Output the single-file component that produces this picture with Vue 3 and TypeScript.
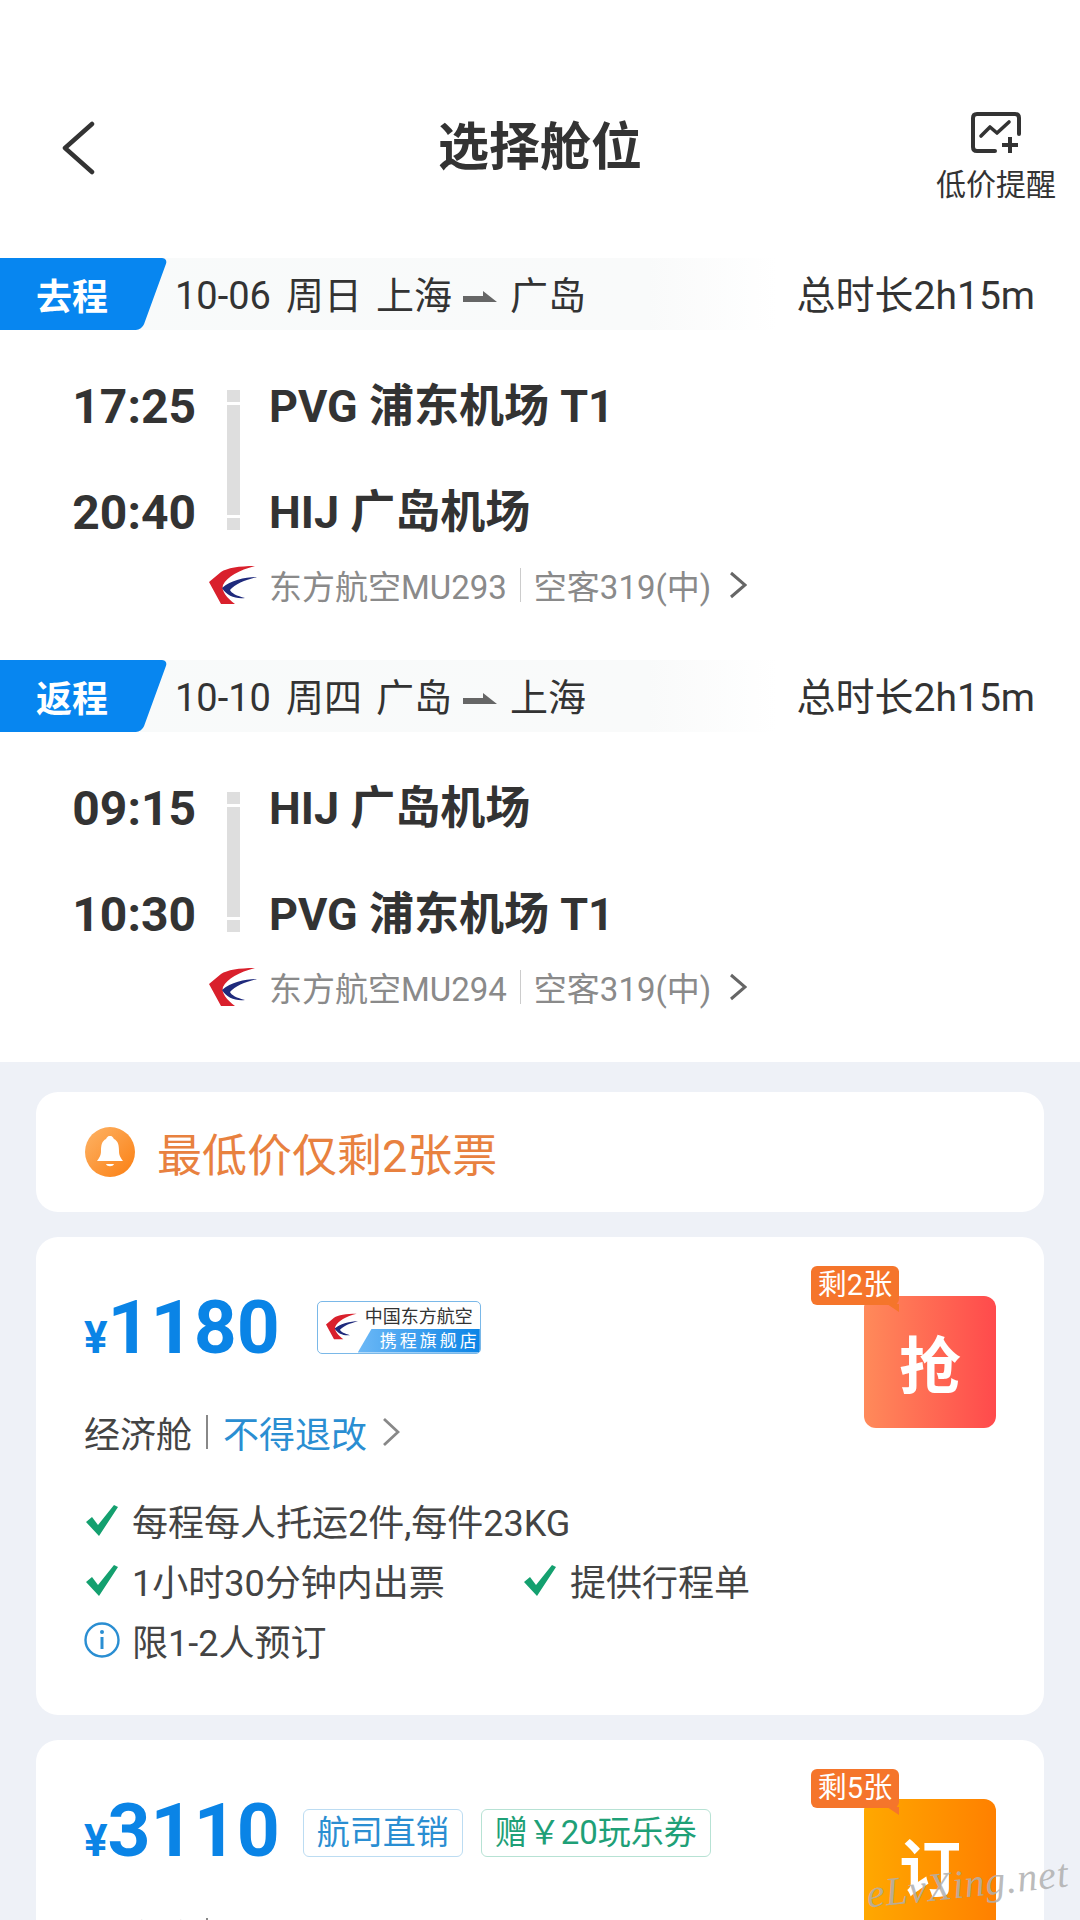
<template>
  <div class="page">
    <header class="topbar">
      <svg class="back" width="34" height="54" viewBox="0 0 34 54"><path d="M31 3 L4 27 L31 51" fill="none" stroke="#333" stroke-width="4.5" stroke-linecap="round" stroke-linejoin="round"/></svg>
      <h1 class="title">选择舱位</h1>
      <div class="remind">
        <svg width="50" height="42" viewBox="0 0 50 42"><path d="M24 39 H6 Q2 39 2 35 V6 Q2 2 6 2 H44 Q48 2 48 6 V22" fill="none" stroke="#333" stroke-width="4" stroke-linecap="round"/><path d="M10 24 L19 15 L26 21 L38 10" fill="none" stroke="#333" stroke-width="3.6" stroke-linecap="round" stroke-linejoin="round"/><path d="M31 33 H47 M39 25 V41" fill="none" stroke="#333" stroke-width="4"/></svg>
        <span>低价提醒</span>
      </div>
    </header>

    <section v-for="leg in legs" :key="leg.tag" class="leg">
      <div class="leg-head">
        <div class="leg-tag"><span>{{ leg.tag }}</span></div>
        <div class="leg-date">
          <span>{{ leg.date }}</span><span>{{ leg.week }}</span><span>{{ leg.from }}</span>
          <svg class="arrow" width="34" height="12" viewBox="0 0 34 12"><path d="M0 5 H20 V0 L34 11 H0 Z" fill="#666"/></svg>
          <span>{{ leg.to }}</span>
        </div>
        <div class="leg-total">总时长2h15m</div>
      </div>
      <div class="route">
        <div class="times"><div>{{ leg.dep }}</div><div>{{ leg.arr }}</div></div>
        <div class="route-line"><i></i><i class="long"></i><i></i></div>
        <div class="ports"><div>{{ leg.depPort }}</div><div>{{ leg.arrPort }}</div></div>
      </div>
      <div class="airline">
        <svg class="logo" width="48" height="40" viewBox="0 0 48 40">
          <path d="M46 1 C30 1 18 3 12 7 L0 17 L12 39 H26 C18 33 12 26 14 20 C18 12 30 5 46 1 Z" fill="#d9202c"/>
          <path d="M48 12 C36 12 22 15 13 23 C18 31 26 34 36 33 C28 31 22 28 21 25 C26 19 36 15 48 12 Z" fill="#1f2a7c"/>
        </svg>
        <span>东方航空{{ leg.flight }}</span><b class="sep"></b><span>空客319(中)</span>
        <svg class="more" width="18" height="28" viewBox="0 0 18 28"><path d="M2 2 L16 14 L2 26" fill="none" stroke="#666" stroke-width="3"/></svg>
      </div>
    </section>

    <main class="list">
      <div class="notice">
        <svg width="50" height="50" viewBox="0 0 50 50">
          <defs><linearGradient id="bell" x1="0" y1="0" x2="1" y2="1"><stop offset="0" stop-color="#fdb366"/><stop offset="1" stop-color="#fb7f12"/></linearGradient></defs>
          <circle cx="25" cy="25" r="25" fill="url(#bell)"/>
          <path d="M25 9 C28 9 28 11 29 12 C33 14 34 18 34 24 C34 29 36 31 38 34 H12 C14 31 16 29 16 24 C16 18 17 14 21 12 C22 11 22 9 25 9 Z" fill="#fff"/>
          <path d="M21 37 H29 C28 40 22 40 21 37 Z" fill="#fff"/>
        </svg>
        <span>最低价仅剩2张票</span>
      </div>

      <article v-for="fare in fares" :key="fare.price" class="card">
        <div class="fare-head">
          <div class="price"><small>¥</small>{{ fare.price }}</div>
          <div v-if="fare.store" class="store">
            <svg width="48" height="36" viewBox="0 0 48 40">
              <path d="M46 1 C30 1 18 3 12 7 L0 17 L12 39 H26 C18 33 12 26 14 20 C18 12 30 5 46 1 Z" fill="#d9202c"/>
              <path d="M48 12 C36 12 22 15 13 23 C18 31 26 34 36 33 C28 31 22 28 21 25 C26 19 36 15 48 12 Z" fill="#1f2a7c"/>
            </svg>
            <div class="store-name">中国东方航空</div>
            <div class="store-sub">携程旗舰店</div>
          </div>
          <div v-for="t in fare.tags" :key="t.text" class="tag" :class="t.kind">{{ t.text }}</div>
        </div>
        <div class="cabin">
          <span>经济舱</span><b class="bar"></b><span class="rule">不得退改</span>
          <svg width="18" height="30" viewBox="0 0 18 30"><path d="M2 2 L16 15 L2 28" fill="none" stroke="#888" stroke-width="2.8"/></svg>
        </div>
        <div v-if="fare.rows" class="perks">
          <div class="perk-row">
            <svg class="tick" width="34" height="33" viewBox="0 0 34 33"><path d="M1 18 L7 13 L13 21 L29 1 L33 3 L14 32 Z" fill="#14a06f"/></svg>
            <span>每程每人托运2件,每件23KG</span>
          </div>
          <div class="perk-row">
            <svg class="tick" width="34" height="33" viewBox="0 0 34 33"><path d="M1 18 L7 13 L13 21 L29 1 L33 3 L14 32 Z" fill="#14a06f"/></svg>
            <span class="perk-wide">1小时30分钟内出票</span>
            <svg class="tick" width="34" height="33" viewBox="0 0 34 33"><path d="M1 18 L7 13 L13 21 L29 1 L33 3 L14 32 Z" fill="#14a06f"/></svg>
            <span>提供行程单</span>
          </div>
          <div class="perk-row">
            <svg class="tick" width="36" height="36" viewBox="0 0 36 36"><circle cx="18" cy="18" r="16.5" fill="none" stroke="#2a8ed2" stroke-width="2.4"/><path d="M18 15 V27" stroke="#2a8ed2" stroke-width="3"/><circle cx="18" cy="10" r="2" fill="#2a8ed2"/></svg>
            <span>限1-2人预订</span>
          </div>
        </div>
        <div class="buy" :class="fare.btn">
          <span class="buy-text">{{ fare.action }}</span>
          <span class="left">{{ fare.left }}</span>
        </div>
      </article>
    </main>

    <div class="watermark">eLvXing.net</div>
  </div>
</template>

<script setup lang="ts">
const legs = [
  { tag: '去程', date: '10-06', week: '周日', from: '上海', to: '广岛', dep: '17:25', arr: '20:40', depPort: 'PVG 浦东机场 T1', arrPort: 'HIJ 广岛机场', flight: 'MU293' },
  { tag: '返程', date: '10-10', week: '周四', from: '广岛', to: '上海', dep: '09:15', arr: '10:30', depPort: 'HIJ 广岛机场', arrPort: 'PVG 浦东机场 T1', flight: 'MU294' },
]

const fares = [
  { price: '1180', store: true, tags: [], action: '抢', left: '剩2张', btn: 'red', rows: true },
  {
    price: '3110', store: false,
    tags: [{ text: '航司直销', kind: 'blue' }, { text: '赠￥20玩乐券', kind: 'green' }],
    action: '订', left: '剩5张', btn: 'orange', rows: false,
  },
]
</script>

<style>
html, body { background: #fff; }
</style>

<style scoped>
.page {
  position: relative; width: 1080px; height: 1920px; overflow: hidden; background: #fff; color: #333;
  font-family: Roboto, "Noto Sans CJK SC", sans-serif;
}
.topbar { position: relative; height: 258px; display: flex; justify-content: center; box-sizing: border-box; padding-top: 113px; }
.back { position: absolute; left: 61px; top: 121px; }
.title { margin: 0; font-size: 51px; line-height: 70px; font-weight: 700; color: #333; }
.remind { position: absolute; right: 25px; top: 112px; width: 118px; display: flex; flex-direction: column; align-items: center; font-size: 30px; line-height: 40px; white-space: nowrap; }
.remind span { margin-top: 11px; }

.leg { height: 402px; }
.leg-head { height: 72px; display: flex; align-items: center; background: linear-gradient(90deg, #f8fafa 0, #f9fafa 60%, #fff 72%); }
.leg-tag { position: relative; width: 140px; height: 72px; display: flex; align-items: center; padding-left: 36px; box-sizing: border-box; color: #fff; font-size: 36px; font-weight: 700; overflow: visible; }
.leg-tag::before { content: ""; position: absolute; left: -30px; right: -15px; top: 0; bottom: 0; background: #0786f0; border-radius: 6px; transform: skewX(-20deg); }
.leg-tag span { position: relative; }
.leg-date { display: flex; align-items: center; gap: 14px; margin: 4px 0 0 35px; font-size: 38px; line-height: 72px; white-space: nowrap; }
.leg-date span:nth-child(2) { margin-left: 1px; }
.arrow { margin: 2px -1px 0 -3px; }
.leg-total { margin: -4px 45px 0 auto; font-size: 39px; white-space: nowrap; }

.route { display: flex; margin-top: 43px; height: 140px; }
.times { width: 196px; text-align: right; font-size: 48px; font-weight: 700; line-height: 44px; display: flex; flex-direction: column; justify-content: space-between; padding: 12px 0 0; box-sizing: border-box; height: 162px; }
.route-line { width: 13px; margin: 17px 0 0 31px; height: 140px; display: flex; flex-direction: column; gap: 3px; }
.route-line i { display: block; height: 12px; background: #dedede; }
.route-line i.long { flex: 1; }
.ports { margin-left: 29px; font-size: 45px; font-weight: 700; line-height: 44px; display: flex; flex-direction: column; justify-content: space-between; padding-top: 12px; box-sizing: border-box; height: 162px; white-space: nowrap; }

.airline { display: flex; align-items: center; height: 44px; margin: 50px 0 0 209px; font-size: 33px; color: #8a8a8a; white-space: nowrap; }
.logo { margin-right: 12px; }
.sep { width: 1px; height: 34px; background: #ccc; margin: 0 13px; }
.more { margin-left: 18px; }

.list { background: #eef1f7; height: 858px; box-sizing: border-box; padding: 30px 36px 0; display: flex; flex-direction: column; gap: 25px; margin-top: 0; }
.notice { height: 120px; flex: none; background: #fff; border-radius: 22px; display: flex; align-items: center; padding-left: 49px; gap: 22px; font-size: 45px; color: #e8813f; box-sizing: border-box; }

.card { position: relative; flex: none; background: #fff; border-radius: 22px; padding: 0 48px; box-sizing: border-box; height: 478px; }
.fare-head { display: flex; align-items: center; gap: 26px; padding-top: 57px; height: 72px; box-sizing: content-box; }
.price { margin-top: 4px; font-size: 75px; font-weight: 700; line-height: 72px; color: #0a84e6; white-space: nowrap; }
.price small { font-size: 44px; font-weight: 700; }
.store { position: relative; margin: -6px 0 0 11px; width: 164px; height: 53px; box-sizing: border-box; border: 1px solid #7ab8e8; border-radius: 5px; background: #fff; overflow: hidden; }
.store svg { position: absolute; left: 8px; top: 11px; width: 32px; height: 27px; }
.store-name { position: absolute; left: 47px; top: 3px; font-size: 18px; line-height: 24px; color: #333; white-space: nowrap; }
.store-sub { position: absolute; right: 0; bottom: 0; width: 122px; height: 24px; padding-left: 22px; box-sizing: border-box; background: linear-gradient(90deg, #6cb8f6, #0a84e6); clip-path: polygon(14px 0, 100% 0, 100% 100%, 0 100%); font-size: 17px; line-height: 24px; letter-spacing: 3px; color: #fff; white-space: nowrap; }
.tag { height: 48px; box-sizing: border-box; padding: 0 13px; border-radius: 6px; font-size: 33px; line-height: 46px; white-space: nowrap; background: #fff; }
.tag.blue { border: 1.5px solid #bcdcf2; color: #2a8ed2; margin-left: -3px; }
.tag.green { border: 1.5px solid #b7e2d4; color: #1ea077; margin-left: -8px; }

.cabin { display: flex; align-items: center; height: 50px; margin-top: 41px; font-size: 36px; color: #444; white-space: nowrap; }
.bar { width: 2px; height: 34px; background: #888; margin: 0 15px 0 14px; }
.rule { color: #2a8ed2; font-size: 36px; }
.cabin svg { margin-left: 15px; }

.perks { margin-top: 33px; display: flex; flex-direction: column; font-size: 36px; color: #444; }
.perk-row { height: 60px; display: flex; align-items: center; white-space: nowrap; }
.tick { width: 36px; margin-right: 12px; flex: none; }
.perk-wide { width: 390px; }

.buy { position: absolute; right: 48px; top: 59px; width: 132px; height: 132px; border-radius: 12px; display: flex; align-items: center; justify-content: center; color: #fff; font-size: 62px; font-weight: 700; }
.buy.red { background: linear-gradient(90deg, #ff8a5a, #ff4a4c); }
.buy.orange { background: linear-gradient(90deg, #ffa800, #ff8000); }
.left { position: absolute; left: -53px; top: -30px; width: 88px; height: 39px; background: #f5752b; border-radius: 6px; color: #fff; font-size: 29px; font-weight: 400; line-height: 39px; text-align: center; white-space: nowrap; }
.left::after { content: ""; position: absolute; right: 0; bottom: -7px; border-left: 12px solid transparent; border-top: 8px solid #f5752b; }

.watermark { position: absolute; left: 866px; top: 1860px; font-family: "Liberation Serif", serif; font-style: italic; font-size: 40px; letter-spacing: 1px; color: rgba(175, 175, 175, .85); transform: rotate(-6deg); white-space: nowrap; }
</style>
